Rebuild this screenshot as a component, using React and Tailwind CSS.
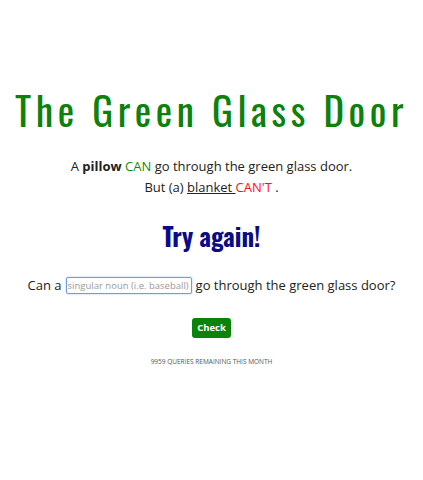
export default function App() {
  return (
    <div className="min-h-[480px] w-full bg-white flex flex-col items-center text-[#222]" style={{ fontFamily: '"Open Sans", "Noto Sans", sans-serif' }}>
      <h1
        className="mt-[83px] text-[39px] leading-[52px] tracking-[4.6px] font-normal text-[#0b820b] whitespace-nowrap"
        style={{ fontFamily: '"Oswald", "DejaVu Sans Condensed", "Liberation Sans Narrow", sans-serif' }}
      >
        The Green Glass Door
      </h1>
      <div className="mt-[21px] text-[13px] leading-[21px] text-center">
        <p>A <b>pillow</b> <span className="text-[#138a13]">CAN</span> go through the green glass door.</p>
        <p>But (a) <span className="underline">blanket </span><span className="text-[#ff1010]">CAN'T</span> .</p>
      </div>
      <h2
        className="mt-[22px] text-[25px] leading-[32px] font-bold text-[#0b0b86]"
        style={{ fontFamily: '"Oswald", "DejaVu Sans Condensed", "Liberation Sans Narrow", sans-serif' }}
      >
        Try again!
      </h2>
      <div className="mt-[24px] flex items-center text-[13px] whitespace-nowrap">
        <span>Can a</span>
        <input
          type="text"
          placeholder="singular noun (i.e. baseball)"
          className="mx-[4px] w-[126px] h-[17px] border border-[#6a9fe6] shadow-[0_0_2px_#9cc0f2] rounded-[2px] px-[1px] text-[9.5px] placeholder:text-[#9a9a9a] outline-none"
        />
        <span>go through the green glass door?</span>
      </div>
      <button className="mt-[22px] bg-[#0a830a] text-white text-[9.5px] font-bold w-[39px] h-[20px] rounded-[3px] leading-[20px]">
        Check
      </button>
      <p className="mt-[19px] text-[6.5px] text-[#555] uppercase">9959 Queries remaining this month</p>
    </div>
  );
}
